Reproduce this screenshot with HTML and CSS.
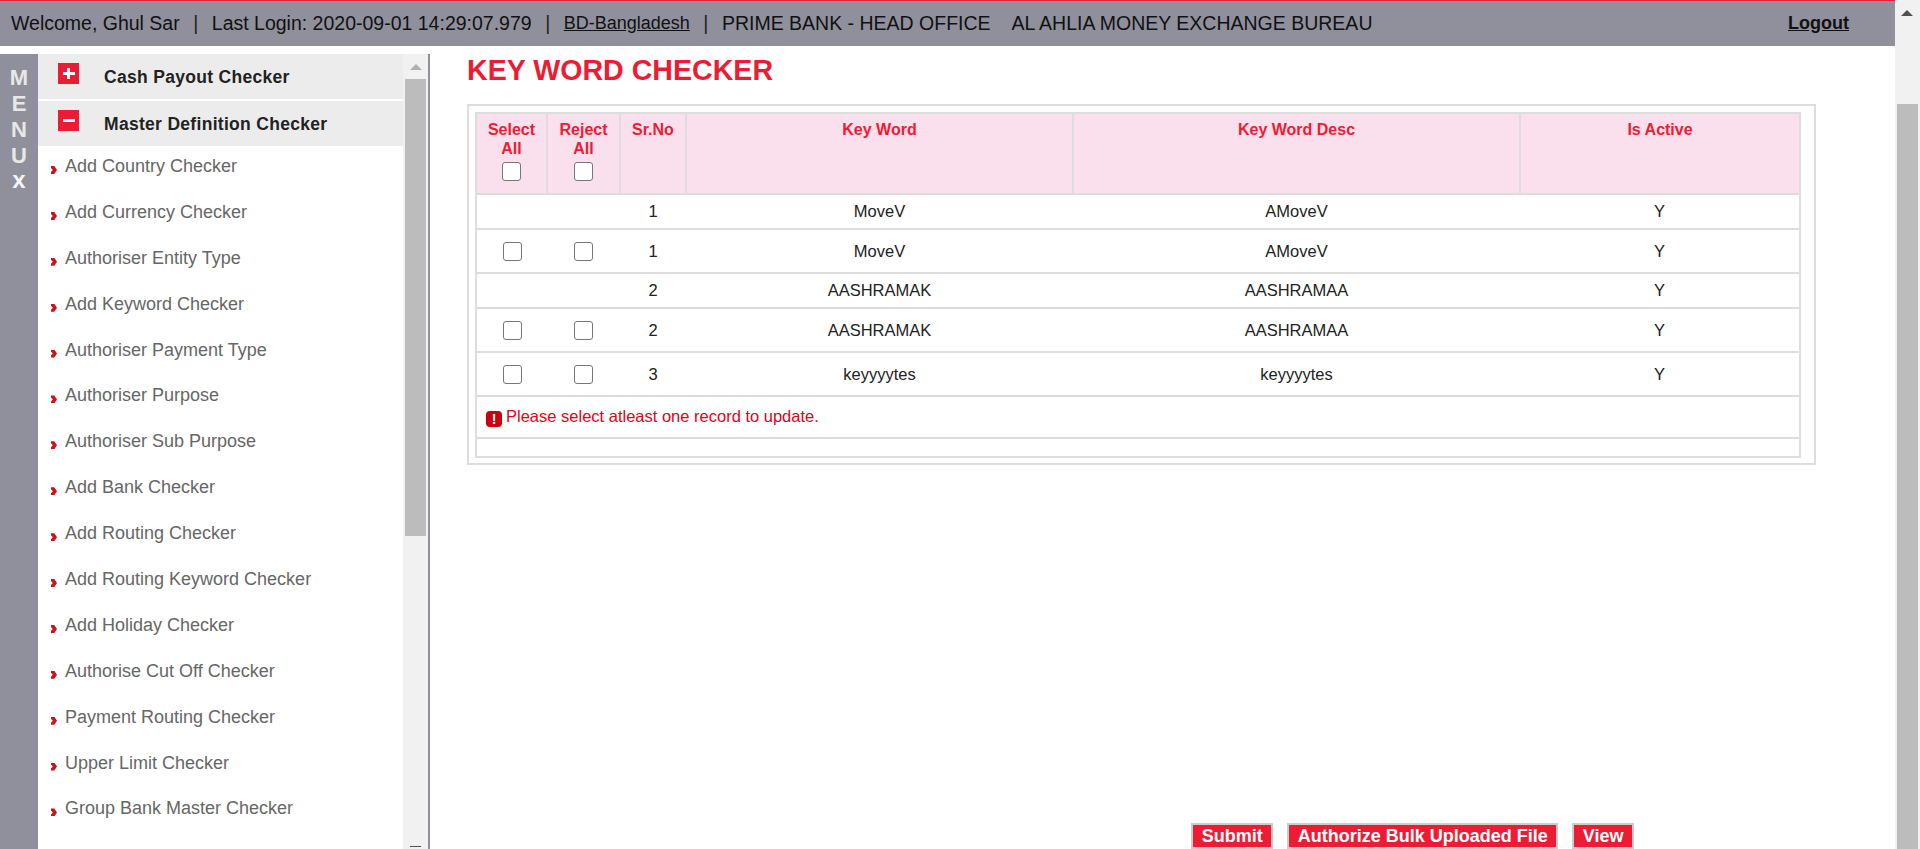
FILE: index.html
```html
<!DOCTYPE html>
<html>
<head>
  <title>Key Word Checker</title>
  <link rel="stylesheet" href="styles.css">
</head>
<body>

  <div class="page">
    <div class="content">

      <div class="topbar">
        <span class="welcome">Welcome, Ghul Sar</span>
        <span class="sep">|</span>
        <span class="login">Last Login: 2020-09-01 14:29:07.979</span>
        <span class="sep">|</span>
        <a class="country" href="#">BD-Bangladesh</a>
        <span class="sep">|</span>
        <span class="branch">PRIME BANK - HEAD OFFICE</span>
        <span class="bureau">AL AHLIA MONEY EXCHANGE BUREAU</span>
        <a class="logout" href="#">Logout</a>
      </div>

      <div class="body-row">
        <div class="menu-tab">
          <span>M</span><span>E</span><span>N</span><span>U</span><span class="menu-x">x</span>
        </div>

        <div class="side">
          <div class="side-list">
            <div class="side-head"><span class="toggle plus"></span>Cash Payout Checker</div>
            <div class="side-head"><span class="toggle"></span>Master Definition Checker</div>
            <ul>
              <li>Add Country Checker</li>
              <li>Add Currency Checker</li>
              <li>Authoriser Entity Type</li>
              <li>Add Keyword Checker</li>
              <li>Authoriser Payment Type</li>
              <li>Authoriser Purpose</li>
              <li>Authoriser Sub Purpose</li>
              <li>Add Bank Checker</li>
              <li>Add Routing Checker</li>
              <li>Add Routing Keyword Checker</li>
              <li>Add Holiday Checker</li>
              <li>Authorise Cut Off Checker</li>
              <li>Payment Routing Checker</li>
              <li>Upper Limit Checker</li>
              <li>Group Bank Master Checker</li>
            </ul>
          </div>
          <div class="side-scroll">
            <div class="arrow-up"></div>
            <div class="side-thumb"></div>
            <div class="arrow-down"></div>
          </div>
        </div>

        <div class="main">
          <h1>KEY WORD CHECKER</h1>

          <div class="box">
            <table>
              <colgroup>
                <col class="c-sel"><col class="c-rej"><col class="c-sr"><col class="c-key"><col class="c-desc"><col>
              </colgroup>
              <thead>
                <tr>
                  <th>Select All<input type="checkbox"></th>
                  <th>Reject All<input type="checkbox"></th>
                  <th>Sr.No</th>
                  <th>Key Word</th>
                  <th>Key Word Desc</th>
                  <th>Is Active</th>
                </tr>
              </thead>
              <tbody>
                <tr class="short">
                  <td></td><td></td><td>1</td><td>MoveV</td><td>AMoveV</td><td>Y</td>
                </tr>
                <tr>
                  <td><input type="checkbox"></td><td><input type="checkbox"></td><td>1</td><td>MoveV</td><td>AMoveV</td><td>Y</td>
                </tr>
                <tr class="short">
                  <td></td><td></td><td>2</td><td>AASHRAMAK</td><td>AASHRAMAA</td><td>Y</td>
                </tr>
                <tr>
                  <td><input type="checkbox"></td><td><input type="checkbox"></td><td>2</td><td>AASHRAMAK</td><td>AASHRAMAA</td><td>Y</td>
                </tr>
                <tr>
                  <td><input type="checkbox"></td><td><input type="checkbox"></td><td>3</td><td>keyyyytes</td><td>keyyyytes</td><td>Y</td>
                </tr>
                <tr class="msg-row">
                  <td colspan="6"><span class="err-icon">!</span>Please select atleast one record to update.</td>
                </tr>
                <tr class="blank-row">
                  <td colspan="6"></td>
                </tr>
              </tbody>
            </table>
          </div>

          <div class="buttons">
            <button>Submit</button>
            <button>Authorize Bulk Uploaded File</button>
            <button>View</button>
          </div>
        </div>
      </div>

    </div>

    <div class="page-scroll">
      <div class="arrow-up dark"></div>
      <div class="page-thumb"></div>
    </div>
  </div>

</body>
</html>
```

FILE: styles.css
```css
html, body { margin: 0; padding: 0; height: 100%; overflow: hidden; }
body { font-family: "Liberation Sans", Arial, sans-serif; background: white; color: #222; }

.page { display: flex; height: 849px; }
.content { flex: 1; display: flex; flex-direction: column; min-width: 0; }

.topbar {
  height: 46px;
  flex: none;
  box-sizing: border-box;
  border-top: 1px solid #ed1c34;
  background: #90909c;
  display: flex;
  align-items: center;
  padding-left: 11px;
  font-size: 19.5px;
  color: #111;
  white-space: nowrap;
}
.topbar a { color: #111; }
.sep { margin: 0 13.5px; color: #222; }
.country { font-size: 18px; }
.bureau { margin-left: 21px; }
.logout { margin-left: auto; margin-right: 46px; font-weight: bold; font-size: 18px; color: #000; }

.body-row { flex: 1; display: flex; min-height: 0; padding-top: 8px; }

.menu-tab {
  width: 38px;
  flex: none;
  background: #90909c;
  color: #e8e8e8;
  font-weight: bold;
  font-size: 22px;
  line-height: 26px;
  text-align: center;
  padding-top: 11px;
  box-sizing: border-box;
}
.menu-tab span { display: block; }
.menu-x { font-size: 24px; line-height: 22px; color: #f4f4f4; }

.side {
  width: 392px;
  flex: none;
  display: flex;
  border-right: 2px solid #90909c;
  box-sizing: border-box;
  overflow: hidden;
}
.side-list { flex: 1; min-width: 0; }
.side-head {
  height: 45px;
  margin-bottom: 2px;
  background: #ececec;
  display: flex;
  align-items: center;
  font-weight: bold;
  font-size: 17.5px;
  color: #222;
  position: relative;
  padding-left: 66px;
  padding-top: 2px;
  box-sizing: border-box;
  letter-spacing: 0.3px;
}
.side-head + .side-head { margin-bottom: 0; }
.toggle {
  position: absolute;
  left: 20px;
  top: 9px;
  width: 21px;
  height: 21px;
  background: #ed1c34;
}
.toggle::after {
  content: "";
  position: absolute;
  left: 5px;
  top: 9px;
  width: 12px;
  height: 3px;
  background: white;
}
.toggle.plus::before {
  content: "";
  position: absolute;
  left: 9px;
  top: 5px;
  width: 3px;
  height: 11px;
  background: white;
}

.side ul { list-style: none; margin: 0; padding: 0; }
.side li {
  height: 45.9px;
  box-sizing: border-box;
  padding: 10px 0 0 27px;
  font-size: 18px;
  line-height: 20px;
  color: #666;
  position: relative;
  white-space: nowrap;
}
.side li::before {
  content: "";
  position: absolute;
  left: 13px;
  top: 20px;
  width: 6px;
  height: 8px;
  background: #c8141e;
  clip-path: polygon(0 0, 55% 0, 100% 50%, 55% 100%, 0 100%, 0 75%, 30% 50%, 0 25%);
}

.side-scroll { width: 25px; flex: none; background: #f1f1f1; position: relative; }
.side-thumb {
  position: absolute;
  left: 2px;
  top: 25px;
  width: 21px;
  height: 457px;
  background: #bcbcbc;
}
.arrow-up {
  position: absolute;
  left: 7px;
  top: 10px;
  width: 0;
  height: 0;
  border-left: 6px solid transparent;
  border-right: 6px solid transparent;
  border-bottom: 6px solid #b0b0b0;
}
.arrow-up.dark { left: 6px; border-bottom-color: #505050; top: 10px; }
.arrow-down {
  position: absolute;
  left: 7px;
  bottom: -4px;
  width: 11px;
  height: 6px;
  border-top: 1px solid #505050;
}

.main {
  flex: 1;
  min-width: 0;
  display: flex;
  flex-direction: column;
  padding-left: 37px;
}
h1 {
  margin: 0;
  font-size: 28.6px;
  line-height: 33px;
  color: #ed1c34;
  font-weight: bold;
}
.box {
  width: 1349px;
  box-sizing: border-box;
  margin-top: 17px;
  border: 2px solid #ddd;
  padding: 6px 13px 5px 6px;
}

table {
  width: 100%;
  border-collapse: collapse;
  table-layout: fixed;
  font-size: 16.5px;
}
.c-sel { width: 71px; }
.c-rej { width: 73px; }
.c-sr { width: 66px; }
.c-key { width: 387px; }
.c-desc { width: 447px; }

th {
  height: 81px;
  box-sizing: border-box;
  padding: 6px 2px 0;
  vertical-align: top;
  background: #fadfec;
  color: #ed1c34;
  font-size: 16px;
  line-height: 19px;
  font-weight: bold;
  border: 2px solid #ddd;
}
input[type=checkbox] {
  appearance: none;
  width: 19px;
  height: 19px;
  margin: 0;
  background: white;
  border: 1px solid #767676;
  border-radius: 3px;
  box-sizing: border-box;
  vertical-align: middle;
}
th input[type=checkbox] { display: block; margin: 4px auto 0; }
td {
  height: 44px;
  box-sizing: border-box;
  padding: 0;
  text-align: center;
  border-top: 2px solid #ddd;
  border-bottom: 2px solid #ddd;
  color: #222;
}
td:first-child { border-left: 2px solid #ddd; }
td:last-child { border-right: 2px solid #ddd; }
.short td { height: 35px; }
.msg-row td {
  height: 42px;
  text-align: left;
  padding-left: 9px;
  color: #e2001a;
}
.blank-row td { height: 19px; }
.err-icon {
  display: inline-block;
  width: 16px;
  height: 16px;
  margin-right: 4px;
  border-radius: 4px;
  background: #c8000f;
  color: white;
  font-size: 14px;
  font-weight: bold;
  line-height: 16px;
  text-align: center;
  vertical-align: -2px;
}

.buttons {
  margin-top: auto;
  display: flex;
  justify-content: flex-end;
  gap: 14px;
  padding-right: 261px;
}
button {
  height: 26px;
  padding: 0 8.5px;
  background: #ed1c34;
  color: white;
  border: 2px solid #ccc;
  font-family: "Liberation Sans", Arial, sans-serif;
  font-weight: bold;
  font-size: 18px;
  line-height: 20px;
}

.page-scroll { width: 25px; flex: none; background: #f1f1f1; position: relative; }
.page-thumb {
  position: absolute;
  left: 2px;
  top: 104px;
  bottom: 0;
  width: 21px;
  background: #bcbcbc;
}
```
